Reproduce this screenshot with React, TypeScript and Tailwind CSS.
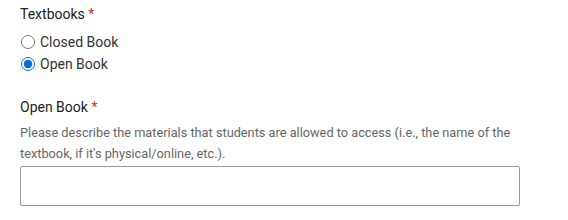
import React, { useState } from 'react';

const App: React.FC = () => {
    const [choice, setChoice] = useState('open');

    return (
        <div className="bg-white w-[568px] h-[220px] px-5 pt-[4px] text-[#212121]" style={{ fontFamily: 'Roboto, "Liberation Sans", sans-serif' }}>
            <div className="text-[14px] leading-[20px]">
                Textbooks <span className="text-[#c0392b]">*</span>
            </div>
            <div className="mt-[8px] flex flex-col gap-[2px]">
                <label className="flex items-center h-[20px] text-[14px] text-[#333]">
                    <input
                        type="radio"
                        name="textbooks"
                        className="m-0 ml-[1px] w-[14px] h-[14px] accent-[#0b6bd8]"
                        checked={choice === 'closed'}
                        onChange={() => setChoice('closed')}
                    />
                    <span className="ml-[5px]">Closed Book</span>
                </label>
                <label className="flex items-center h-[20px] text-[14px] text-[#333]">
                    <input
                        type="radio"
                        name="textbooks"
                        className="m-0 ml-[1px] w-[14px] h-[14px] accent-[#0b6bd8]"
                        checked={choice === 'open'}
                        onChange={() => setChoice('open')}
                    />
                    <span className="ml-[5px]">Open Book</span>
                </label>
            </div>
            <div className="mt-[23px] text-[14px] leading-[20px]">
                Open Book <span className="text-[#c0392b]">*</span>
            </div>
            <p className="mt-[5px] text-[12.75px] leading-[21px] text-[#666]">
                Please describe the materials that students are allowed to access (i.e., the name of the textbook, if it's physical/online, etc.).
            </p>
            <input
                type="text"
                className="mt-[2px] block w-[500px] h-[40px] border border-[#9a9a9a] rounded-[2px] px-2 text-[14px] outline-none"
            />
        </div>
    );
};

export default App;
